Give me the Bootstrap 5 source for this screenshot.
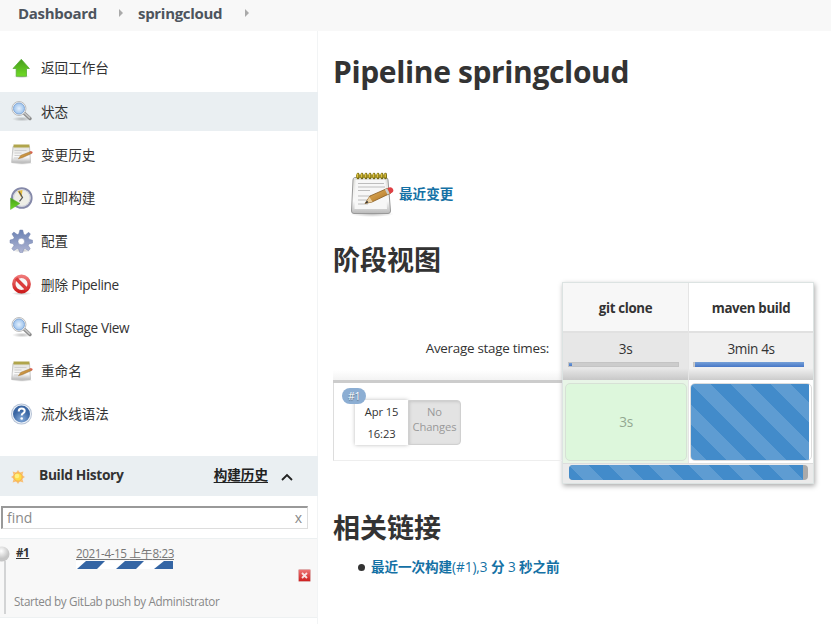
<!DOCTYPE html>
<html lang="zh-CN">
<head>
<meta charset="utf-8">
<meta name="viewport" content="width=device-width, initial-scale=1">
<title>springcloud [Jenkins]</title>
<link href="https://cdn.jsdelivr.net/npm/bootstrap@5.3.0/dist/css/bootstrap.min.css" rel="stylesheet">
<style>
body{font-family:"Open Sans","Noto Sans CJK SC",sans-serif;font-size:13.6px;line-height:20px;letter-spacing:-.38px;color:#333;height:624px;overflow:hidden;background:#fff}
.zh{letter-spacing:0}
.crumbs{height:31px;background:#f8f8f8;color:#4d545d;font-size:15px;font-weight:700;padding:0 0 6px 18px;letter-spacing:-.3px}
.crumbs svg{width:4px;height:8px;fill:#aaa;margin-left:-2px}
.crumb-first{width:103px}
.crumb-second{width:109px;margin-left:15px}
.side-panel{width:318px;height:593px;border-right:1px solid #f2f4f5;flex:none}
.tasks{padding-top:17.75px}
.task{height:39px;margin-bottom:4.25px;padding-left:9px;gap:8px;color:#333;text-decoration:none;width:318px}
.task.current{background:#eaeff2}
.task svg{width:24px;height:24px;margin-top:-1px}
.history{margin-top:22.25px;height:40px;width:318px;background:#eaeff2;padding-left:9px;padding-bottom:3px;font-weight:700;font-size:13.8px}
.history a{color:#222;font-size:13.6px;text-underline-offset:2px}
.finder{margin:10px 0 9px 1px;width:307px;height:23px;border:1px solid #ddd;border-top:2px solid #999;border-left:2px solid #999;padding:0 5px 0 4px;font-size:14px;color:#8a8a8a;letter-spacing:0}
.build{height:80px;width:317px;background:#f8f8f8;border-top:1px solid #ecf0f1;border-bottom:1px solid #eef1f2;position:relative;font-size:12px}
.orb{position:absolute;left:-6px;top:7px;width:16px;height:16px}
.trail{position:absolute;left:4px;top:22px;width:2px;height:53px;background:#d3d4d5}
.build-top{padding:5px 0 0 16px;height:33px}
.num{width:60px;color:#333;font-weight:700;font-size:11.5px;line-height:18px}
.when{color:#777;line-height:18px;font-size:11.7px;white-space:nowrap;display:block;letter-spacing:-.42px}
.strip{width:97px;height:8px;display:block;margin-top:-1px}
.cause{padding:19px 0 0 14px;color:#888;font-size:11.7px;letter-spacing:-.34px}
.kill{position:absolute;left:298px;top:30px;width:13px;height:13px}
main{padding:0 0 0 15px}
h1{font-size:30px;line-height:40px;font-weight:700;margin:21px 0 0;letter-spacing:-.37px}
h2{font-size:27px;line-height:36px;font-weight:700;margin:0;letter-spacing:0}
.changes{margin:77px 0 0 15px;height:49px;gap:3px}
.changes a,.links a{color:#1471a5;text-decoration:none;font-weight:700}
.changes a{padding-top:1px}
.stage-view{display:grid;grid-template-columns:229px 252px;width:481px;height:202px}
.left-head{height:101px;padding:56px 13px 0 0;text-align:right;border-bottom:3px solid #ccc;font-size:13.4px;letter-spacing:-.27px;background:linear-gradient(#fff 90%,#f3f3f3)}
.job{height:78px;border:1px solid #eee;border-left:1px solid #ddd;border-top:0;border-right:0;position:relative}
.job-no{position:absolute;left:8px;top:5px;width:24px;height:16px;border-radius:8px;background:#8caed3;color:#fff;font-size:10.5px;line-height:16px;text-align:center;text-shadow:0 1px 1px #567;z-index:1}
.job-box{margin:17px 0 0 21px;width:106px;height:45px;font-size:11.2px;letter-spacing:-.12px;text-align:center}
.job-date{width:53px;line-height:21.5px;padding-top:1px;box-shadow:0 0 4px #bbb;background:#fff}
.job-log{width:53px;line-height:15px;padding-top:3px;background:#e3e3e3;color:#999;border:1px solid #d0d0d0;border-radius:0 4px 4px 0;box-shadow:inset 1px 1px 3px #c8c8c8}
.stages{border:1px solid #dce3e2;box-shadow:1px 2px 5px #aaa;height:202px;background:#fff}
.stage{width:125px}
.stage-name{height:48px;line-height:50px;text-align:center;font-weight:700;font-size:13.3px;letter-spacing:-.34px}
.average{height:49px;text-align:center;border-top:2px solid #e1e1e1;padding-top:6px;background:linear-gradient(#f0f0f0 75%,#ccc)}
.stage+.stage{border-left:1px solid #e5e5e5}
.first .stage-name{background:#f7f7f7}
.first .average{background:linear-gradient(#e7e7e7 75%,#c8c8c8)}
.meter{width:111px;height:5px;margin:3px 0 0 5px;background:#ccc;border:1px solid #c4c4c4}
.meter div{height:3px;background:linear-gradient(#75a0d8,#4777c7)}
.stage+.stage .meter{margin-left:4px}
.stage+.stage .meter div{height:5px;margin:-1px 0 0 1px}
.result{height:83px;padding:3px 1px 2px 2px}
.first .result{background:#e8f5e7}
.result>div{height:78px;border:1px solid #d7e1d6;border-radius:5px;line-height:75px;text-align:center;color:#93a890}
.stage+.stage .result{padding-left:1px}
.stage+.stage .result>div{border-color:#ddd;overflow:hidden}
.first .result>div{background:#ddf7dc}
.candy{background-color:#428bca;background-image:linear-gradient(45deg,rgba(255,255,255,.15) 25%,transparent 25%,transparent 50%,rgba(255,255,255,.15) 50%,rgba(255,255,255,.15) 75%,transparent 75%);background-size:40px 40px}
.total{height:20px;background:#ebebeb;border-top:1px solid #ddd;padding:1px 6px}
.total .track{height:15px;width:239px;background:#aaa;border-radius:4px;overflow:hidden}
.links{margin:11px 0 0 25px;gap:6px}
.links a{letter-spacing:-.08px}
.dot{width:7px;height:7px;border-radius:50%;background:#333}
</style>
<script src="https://cdn.jsdelivr.net/npm/bootstrap@5.3.0/dist/js/bootstrap.bundle.min.js"></script>
</head>
<body>
<svg width="0" height="0" class="position-absolute">
<defs>
<linearGradient id="green" x2="0" y2="1"><stop stop-color="#459d1c"/><stop offset="1" stop-color="#70db25"/></linearGradient>
<linearGradient id="paper" x2="0" y2="1"><stop stop-color="#e0e0dc"/><stop offset=".65" stop-color="#fafafa"/><stop offset="1" stop-color="#b9b9b9"/></linearGradient>
<linearGradient id="wood" x2="1" y2="1"><stop stop-color="#e8ba65"/><stop offset="1" stop-color="#a96b1c"/></linearGradient>
<linearGradient id="gearfill" x2="0" y2="1"><stop stop-color="#6b82b4"/><stop offset="1" stop-color="#b0b5d3"/></linearGradient>
<radialGradient id="glass"><stop stop-color="#e4f0fd"/><stop offset="1" stop-color="#9dc3ed"/></radialGradient>
<radialGradient id="blue" cy=".8"><stop stop-color="#85abda"/><stop offset="1" stop-color="#3b67a4"/></radialGradient>
<radialGradient id="shade"><stop stop-color="#000" stop-opacity=".25"/><stop offset="1" stop-color="#000" stop-opacity="0"/></radialGradient>
<radialGradient id="orb" cx=".45" cy=".3"><stop stop-color="#fff"/><stop offset="1" stop-color="#c6c6c6"/></radialGradient>
<linearGradient id="red" x2="0" y2="1"><stop stop-color="#ef7777"/><stop offset="1" stop-color="#cd1e1e"/></linearGradient>
</defs>
<symbol id="up" viewBox="0 0 24 24"><ellipse cx="12.5" cy="20.5" rx="8" ry="1.8" fill="url(#shade)"/><path d="M12.3 3.3 20.4 12.5H17.5V20.3H7.2V12.5H4z" fill="url(#green)" stroke="#58ad35" stroke-width=".8"/></symbol>
<symbol id="search" viewBox="0 0 24 24"><ellipse cx="13" cy="20" rx="10" ry="2.4" fill="url(#shade)"/><path d="m15.500 14.500 5.500 5" stroke="#888" stroke-width="3.400" stroke-linecap="round"/><path d="m15.500 14.200 5 4.500" stroke="#c4c4c4" stroke-width="1.800" stroke-linecap="round"/><circle cx="10" cy="9.500" r="7" fill="#eee" stroke="#b8b8b8" stroke-width=".9"/><circle cx="10" cy="9.500" r="5.500" fill="url(#glass)" stroke="#86abd9"/></symbol>
<symbol id="note" viewBox="0 0 48 48"><ellipse cx="24" cy="44" rx="22" ry="3" fill="url(#shade)"/><path d="M6.500 7.500H38Q40 8 40 10L42.500 41Q42.500 43.500 40 43.500H6Q3.500 43.500 3.500 41L5 10Q5 8 6.500 7.500z" fill="url(#paper)" stroke="#999"/><path d="M7.500 10H37.500L39 39H6.500z" fill="#f7f7f7"/><path d="M10 13.500H36M10 17H37M10 20.500H22M10 26H30M10 30H26M10 34H20" stroke="#bdbdbd" stroke-width="1.200"/><path d="M8 4.500h31v3.500H8z" fill="#b5a335"/><path d="M10 4v4m4-4v4m4-4v4m4-4v4m4-4v4m4-4v4m4-4v4m3.500-4v4" stroke="#716817" stroke-width="2.600" stroke-linecap="round"/><path d="M9.700 3.500v4m4-4v4m4-4v4m4-4v4m4-4v4m4-4v4m4-4v4m3.500-4v4" stroke="#dfc13b" stroke-width="1.400"/><path d="m17 33.500 5-7.500L39 18.500q4 .5 4 4.500L24 32z" fill="url(#wood)" stroke="#865b22" stroke-width=".8"/><path d="m17 33.500 4.500-6.500 3 4.700z" fill="#ebcf9e"/><path d="m17 33.500 2-3 1.500 2z" fill="#333"/><path d="m38 19 2.500 5" stroke="#ccc" stroke-width="2.500"/><path d="m39.500 18q4-2 5.500 1t-3 4.500z" fill="#df4045"/></symbol>
<symbol id="smallnote" viewBox="0 0 24 24"><ellipse cx="13" cy="21.300" rx="11" ry="1.500" fill="url(#shade)"/><path d="M4 4.500H20.500L21.500 20.500H2.700z" fill="url(#paper)" stroke="#bbb" stroke-width=".8"/><path d="M4.500 2.500h16v3h-16z" fill="#b0a54b"/><path d="M5.500 8.500h12M5.500 11h7M5.500 13.500h6M5 16h4" stroke="#ccc" stroke-width=".9"/><path d="m9.300 16.800 2.500-3.500 9.200-3.500 1.500 1.800-9.200 4.200z" fill="url(#wood)" stroke="#8e6733" stroke-width=".4"/><path d="m20.700 9 2.500.4.500 1.500-1.600.8z" fill="#d95d4c"/></symbol>
<symbol id="clock" viewBox="0 0 24 24"><circle cx="12.800" cy="12" r="9.800" fill="#eeeee7" stroke="#8589a9" stroke-width="2"/><circle cx="12.800" cy="12" r="8.300" fill="none" stroke="#cfd1dd"/><path d="M12.500 12 8.500 5l5-1z" fill="#e4bd42"/><path d="m10 5.500 3.500 6-3 3.800" fill="none" stroke="#555" stroke-width="1.200"/><path d="M1.500 12v11.500L11 17.500z" fill="url(#green)" stroke="#63b43c" stroke-width=".5"/></symbol>
<symbol id="gear" viewBox="0 0 24 24"><ellipse cx="13" cy="21.500" rx="9" ry="2" fill="url(#shade)"/><g transform="translate(1 1) scale(.94)" fill="url(#gearfill)" stroke="#7181ac" stroke-width=".5"><path fill-rule="evenodd" d="M10.500 0h3l1.200 4.500 1.600.7 3.600-2.700 1.800 1.800-2.200 3.800.7 1.700 3.800 1v3l-3.900 1-.7 1.700 2.200 3.500-2 2-3.500-2.200-1.700.7L13.500 24h-3l-1.200-3.500-1.700-.7L4 22l-2-2.100 2.200-3.500-.7-1.700-3.500-1v-3l3.700-1 .7-1.700-2.300-3.800 2-2 3.600 2.700 1.600-.7zM12 8.700a3.500 3.500 0 1 0 0 7 3.500 3.500 0 0 0 0-7z"/></g></symbol>
<symbol id="stop" viewBox="0 0 24 24"><ellipse cx="12.500" cy="21.500" rx="10" ry="1.800" fill="url(#shade)"/><circle cx="12.500" cy="12" r="7.700" fill="#f7f7f7" stroke="url(#red)" stroke-width="3.400"/><path d="m7 6.500 11 11" stroke="#db3c3c" stroke-width="3.400"/></symbol>
<symbol id="help" viewBox="0 0 24 24"><circle cx="12.500" cy="12" r="10.500" fill="#b6c3d6"/><circle cx="12.500" cy="12" r="9.500" fill="#edf2f8"/><circle cx="12.500" cy="12" r="8.500" fill="url(#blue)"/><path d="M9.700 9.500q0-3 3-3t3 2.500q0 1.300-1.700 2.300-1.300.8-1.300 2.200" fill="none" stroke="#fff" stroke-width="2"/><circle cx="12.700" cy="16.500" r="1.300" fill="#fff"/></symbol>
</svg>

<nav class="crumbs d-flex align-items-center">
<span class="crumb-first">Dashboard</span><svg viewBox="0 0 4 8"><path d="M0 0 4 4 0 8z"/></svg>
<span class="crumb-second">springcloud</span><svg viewBox="0 0 4 8"><path d="M0 0 4 4 0 8z"/></svg>
</nav>
<div class="d-flex">
<aside class="side-panel">
<div class="tasks">
<a class="task d-flex align-items-center"><svg><use href="#up"/></svg><span class="zh">返回工作台</span></a>
<a class="task current d-flex align-items-center"><svg><use href="#search"/></svg><span class="zh">状态</span></a>
<a class="task d-flex align-items-center"><svg><use href="#smallnote"/></svg><span class="zh">变更历史</span></a>
<a class="task d-flex align-items-center"><svg><use href="#clock"/></svg><span class="zh">立即构建</span></a>
<a class="task d-flex align-items-center"><svg><use href="#gear"/></svg><span class="zh">配置</span></a>
<a class="task d-flex align-items-center"><svg><use href="#stop"/></svg><span><span class="zh">删除</span> Pipeline</span></a>
<a class="task d-flex align-items-center"><svg><use href="#search"/></svg><span>Full Stage View</span></a>
<a class="task d-flex align-items-center"><svg><use href="#smallnote"/></svg><span class="zh">重命名</span></a>
<a class="task d-flex align-items-center"><svg><use href="#help"/></svg><span class="zh">流水线语法</span></a>
</div>
<div class="history d-flex align-items-center">
<svg width="18" height="18" viewBox="0 0 18 18" class="mt-1"><path d="m9 2 1.800 2.600 3.600-1-1 3.600L16 9l-2.600 1.800 1 3.600-3.600-1L9 16l-1.800-2.600-3.600 1 1-3.600L2 9l2.600-1.800-1-3.600 3.600 1z" fill="#f8c179"/><circle cx="9" cy="9" r="4.200" fill="#ffdc45" stroke="#f5ad55"/><circle cx="8" cy="8" r="2.300" fill="#fff080"/></svg>
<span class="flex-grow-1 ps-2 ms-1">Build History</span><a href="#" class="zh">构建历史</a>
<svg width="12" height="8" viewBox="0 0 12 8" class="mt-1" style="margin-left:13px;margin-right:25px"><path d="m1 7 5-5 5 5" fill="none" stroke="#222" stroke-width="1.800"/></svg>
</div>
<div class="finder d-flex align-items-center justify-content-between"><span>find</span><span>x</span></div>
<div class="build">
<div class="trail"></div><svg class="orb" viewBox="0 0 16 16"><circle cx="8" cy="8" r="7.500" fill="url(#orb)"/></svg>
<div class="build-top d-flex"><a class="num" href="#">#1</a><div><a class="when" href="#">2021-4-15 <span class="zh">上午</span>8:23</a>
<svg class="strip" viewBox="0 0 97 8"><path d="M0 0h97v8H0z" fill="#fff"/><path d="M10 0h19l-8 8H1zM49 0h19l-8 8H40zM88 0h9v8H78z" fill="#3465a4"/></svg></div></div>
<div class="cause">Started by GitLab push by Administrator</div>
<svg class="kill" viewBox="0 0 13 13"><rect x=".5" y=".5" width="12" height="12" rx="1" fill="url(#red)" stroke="#dfadad"/><path d="m4 4 5 5m0-5-5 5" stroke="#f9e3e3" stroke-width="1.800"/></svg>
</div>
</aside>
<main>
<h1>Pipeline springcloud</h1>
<div class="changes d-flex align-items-center"><svg width="48" height="48"><use href="#note"/></svg><a href="#" class="zh">最近变更</a></div>
<h2 style="margin-top:24px">阶段视图</h2>
<div class="stage-view" style="margin-top:4px">
<div>
<div class="left-head">Average stage times:</div>
<div class="job"><span class="job-no">#1</span><div class="d-flex"><div class="job-box d-flex"><div class="job-date">Apr 15<br>16:23</div><div class="job-log">No<br>Changes</div></div></div></div>
</div>
<div class="stages">
<div class="d-flex">
<div class="stage first"><div class="stage-name">git clone</div><div class="average">3s<div class="meter"><div style="width:3px"></div></div></div><div class="result"><div>3s</div></div></div>
<div class="stage"><div class="stage-name">maven build</div><div class="average">3min 4s<div class="meter"><div style="width:109px"></div></div></div><div class="result"><div><div class="candy h-100" style="width:98%"></div></div></div></div>
</div>
<div class="total"><div class="track"><div class="candy h-100" style="width:98%"></div></div></div>
</div>
</div>
<h2 style="margin-top:26px">相关链接</h2>
<div class="links d-flex align-items-center"><span class="dot"></span><a href="#">最近一次构建<span class="fw-normal">(#1),3</span> 分 <span class="fw-normal">3</span> 秒之前</a></div>
</main>
</div>
</body>
</html>
